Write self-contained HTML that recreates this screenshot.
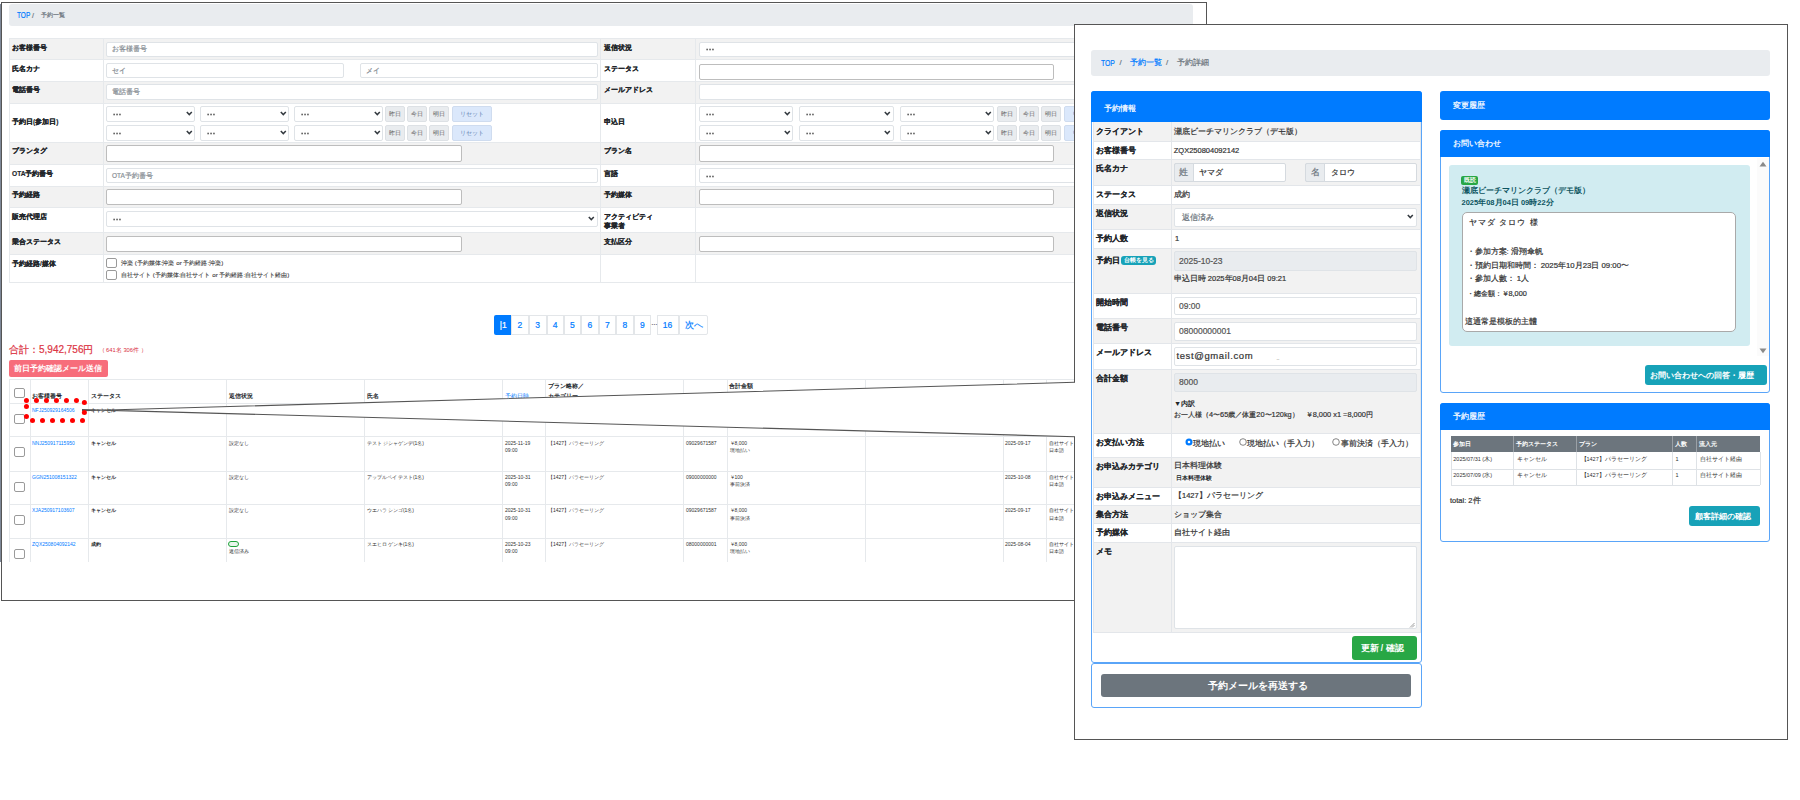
<!DOCTYPE html>
<html><head><meta charset="utf-8"><style>
html,body{margin:0;padding:0;background:#fff;width:1800px;height:800px;overflow:hidden;position:relative}
body{font-family:"Liberation Sans",sans-serif}
div{position:absolute}
.t{white-space:nowrap}
.s{-webkit-text-stroke:0.2px currentColor}
</style></head><body>
<div style="left:1px;top:2px;width:1206px;height:599px;border:1px solid #555;background:#fff;box-sizing:border-box"></div>
<div style="left:0px;top:4px;width:1px;height:558px;background:#7d8797"></div>
<div style="left:9px;top:4px;width:1184px;height:22px;background:#e9ecef;border-radius:3px"></div>
<div class="t s" style="left:16.5px;top:10.88px;font-size:9px;line-height:9px;color:#007bff;transform:scaleX(0.72);transform-origin:0 0">TOP</div>
<div class="t s" style="left:32px;top:11.84px;font-size:7px;line-height:7px;color:#6c757d;">/</div>
<div class="t s" style="left:41px;top:12.13px;font-size:6.4px;line-height:6.4px;color:#6c757d;">予約一覧</div>
<div style="left:9px;top:38.5px;width:1184px;height:21.0px;background:#f2f2f2"></div>
<div style="left:9px;top:81px;width:1184px;height:22px;background:#f2f2f2"></div>
<div style="left:9px;top:142px;width:1184px;height:22.5px;background:#f2f2f2"></div>
<div style="left:9px;top:186px;width:1184px;height:21.5px;background:#f2f2f2"></div>
<div style="left:9px;top:232.5px;width:1184px;height:22.0px;background:#f2f2f2"></div>
<div style="left:9px;top:38.0px;width:1184px;height:1.0px;background:#e6e9ec"></div>
<div style="left:9px;top:59.0px;width:1184px;height:1.0px;background:#e6e9ec"></div>
<div style="left:9px;top:80.5px;width:1184px;height:1.0px;background:#e6e9ec"></div>
<div style="left:9px;top:102.5px;width:1184px;height:1.0px;background:#e6e9ec"></div>
<div style="left:9px;top:141.5px;width:1184px;height:1.0px;background:#e6e9ec"></div>
<div style="left:9px;top:164.0px;width:1184px;height:1.0px;background:#e6e9ec"></div>
<div style="left:9px;top:185.5px;width:1184px;height:1.0px;background:#e6e9ec"></div>
<div style="left:9px;top:207.0px;width:1184px;height:1.0px;background:#e6e9ec"></div>
<div style="left:9px;top:232.0px;width:1184px;height:1.0px;background:#e6e9ec"></div>
<div style="left:9px;top:254.0px;width:1184px;height:1.0px;background:#e6e9ec"></div>
<div style="left:9px;top:282.0px;width:1184px;height:1.0px;background:#e6e9ec"></div>
<div style="left:9px;top:38.5px;width:1px;height:244.0px;background:#e6e9ec"></div>
<div style="left:103px;top:38.5px;width:1px;height:244.0px;background:#e6e9ec"></div>
<div style="left:600px;top:38.5px;width:1px;height:244.0px;background:#e6e9ec"></div>
<div style="left:695px;top:38.5px;width:1px;height:244.0px;background:#e6e9ec"></div>
<div style="left:1192px;top:38.5px;width:1px;height:244.0px;background:#e6e9ec"></div>
<div class="t" style="left:12px;top:44.63px;font-size:6.6px;line-height:6.6px;color:#212529;font-weight:bold;-webkit-text-stroke:0.15px #212529">お客様番号</div>
<div class="t" style="left:603.5px;top:44.63px;font-size:6.6px;line-height:6.6px;color:#212529;font-weight:bold;-webkit-text-stroke:0.15px #212529">返信状況</div>
<div class="t" style="left:12px;top:65.63px;font-size:6.6px;line-height:6.6px;color:#212529;font-weight:bold;-webkit-text-stroke:0.15px #212529">氏名カナ</div>
<div class="t" style="left:603.5px;top:65.63px;font-size:6.6px;line-height:6.6px;color:#212529;font-weight:bold;-webkit-text-stroke:0.15px #212529">ステータス</div>
<div class="t" style="left:12px;top:87.13px;font-size:6.6px;line-height:6.6px;color:#212529;font-weight:bold;-webkit-text-stroke:0.15px #212529">電話番号</div>
<div class="t" style="left:603.5px;top:87.13px;font-size:6.6px;line-height:6.6px;color:#212529;font-weight:bold;-webkit-text-stroke:0.15px #212529">メールアドレス</div>
<div class="t" style="left:12px;top:119.33px;font-size:6.6px;line-height:6.6px;color:#212529;font-weight:bold;-webkit-text-stroke:0.15px #212529">予約日(参加日)</div>
<div class="t" style="left:603.5px;top:119.33px;font-size:6.6px;line-height:6.6px;color:#212529;font-weight:bold;-webkit-text-stroke:0.15px #212529">申込日</div>
<div class="t" style="left:12px;top:148.13px;font-size:6.6px;line-height:6.6px;color:#212529;font-weight:bold;-webkit-text-stroke:0.15px #212529">プランタグ</div>
<div class="t" style="left:603.5px;top:148.13px;font-size:6.6px;line-height:6.6px;color:#212529;font-weight:bold;-webkit-text-stroke:0.15px #212529">プラン名</div>
<div class="t" style="left:12px;top:170.63px;font-size:6.6px;line-height:6.6px;color:#212529;font-weight:bold;-webkit-text-stroke:0.15px #212529">OTA予約番号</div>
<div class="t" style="left:603.5px;top:170.63px;font-size:6.6px;line-height:6.6px;color:#212529;font-weight:bold;-webkit-text-stroke:0.15px #212529">言語</div>
<div class="t" style="left:12px;top:192.13px;font-size:6.6px;line-height:6.6px;color:#212529;font-weight:bold;-webkit-text-stroke:0.15px #212529">予約経路</div>
<div class="t" style="left:603.5px;top:192.13px;font-size:6.6px;line-height:6.6px;color:#212529;font-weight:bold;-webkit-text-stroke:0.15px #212529">予約媒体</div>
<div class="t" style="left:12px;top:213.63px;font-size:6.6px;line-height:6.6px;color:#212529;font-weight:bold;-webkit-text-stroke:0.15px #212529">販売代理店</div>
<div class="t" style="left:603.5px;top:211.7px;font-size:6.6px;line-height:9.6px;color:#212529;font-weight:bold;-webkit-text-stroke:0.15px #212529">アクティビティ<br>事業者</div>
<div class="t" style="left:12px;top:238.63px;font-size:6.6px;line-height:6.6px;color:#212529;font-weight:bold;-webkit-text-stroke:0.15px #212529">乗合ステータス</div>
<div class="t" style="left:603.5px;top:238.63px;font-size:6.6px;line-height:6.6px;color:#212529;font-weight:bold;-webkit-text-stroke:0.15px #212529">支払区分</div>
<div class="t" style="left:12px;top:260.63px;font-size:6.6px;line-height:6.6px;color:#212529;font-weight:bold;-webkit-text-stroke:0.15px #212529">予約経路/媒体</div>
<div style="left:106px;top:41.5px;width:491.5px;height:15.0px;background:#fff;border:1px solid #dfe3e7;border-radius:2px;box-sizing:border-box"></div>
<div class="t s" style="left:112px;top:46.38px;font-size:6.5px;line-height:6.5px;color:#8a9197;">お客様番号</div>
<div style="left:106px;top:62.5px;width:238px;height:15.5px;background:#fff;border:1px solid #dfe3e7;border-radius:2px;box-sizing:border-box"></div>
<div class="t s" style="left:112px;top:67.63px;font-size:6.5px;line-height:6.5px;color:#8a9197;">セイ</div>
<div style="left:360px;top:62.5px;width:237.5px;height:15.5px;background:#fff;border:1px solid #dfe3e7;border-radius:2px;box-sizing:border-box"></div>
<div class="t s" style="left:366px;top:67.63px;font-size:6.5px;line-height:6.5px;color:#8a9197;">メイ</div>
<div style="left:106px;top:84px;width:491.5px;height:15.5px;background:#fff;border:1px solid #dfe3e7;border-radius:2px;box-sizing:border-box"></div>
<div class="t s" style="left:112px;top:89.13px;font-size:6.5px;line-height:6.5px;color:#8a9197;">電話番号</div>
<div style="left:106.3px;top:106px;width:88.7px;height:16px;background:#fff;border:1px solid #dfe3e7;border-radius:2px;box-sizing:border-box"></div>
<svg style="position:absolute;left:113.3px;top:113.3px" width="10" height="3"><rect x="0.3" y="0.7" width="1.7" height="1.6" fill="#666"/><rect x="3.1999999999999997" y="0.7" width="1.7" height="1.6" fill="#666"/><rect x="6.1" y="0.7" width="1.7" height="1.6" fill="#666"/></svg>
<svg style="position:absolute;left:185.8px;top:111.19px;overflow:visible" width="6.6" height="5.63"><path d="M0.8 1 L3.3 3.63 L5.8 1" fill="none" stroke="#343a40" stroke-width="1.5"/></svg>
<div style="left:200.3px;top:106px;width:88.7px;height:16px;background:#fff;border:1px solid #dfe3e7;border-radius:2px;box-sizing:border-box"></div>
<svg style="position:absolute;left:207.3px;top:113.3px" width="10" height="3"><rect x="0.3" y="0.7" width="1.7" height="1.6" fill="#666"/><rect x="3.1999999999999997" y="0.7" width="1.7" height="1.6" fill="#666"/><rect x="6.1" y="0.7" width="1.7" height="1.6" fill="#666"/></svg>
<svg style="position:absolute;left:279.8px;top:111.19px;overflow:visible" width="6.6" height="5.63"><path d="M0.8 1 L3.3 3.63 L5.8 1" fill="none" stroke="#343a40" stroke-width="1.5"/></svg>
<div style="left:294.3px;top:106px;width:88.7px;height:16px;background:#fff;border:1px solid #dfe3e7;border-radius:2px;box-sizing:border-box"></div>
<svg style="position:absolute;left:301.3px;top:113.3px" width="10" height="3"><rect x="0.3" y="0.7" width="1.7" height="1.6" fill="#666"/><rect x="3.1999999999999997" y="0.7" width="1.7" height="1.6" fill="#666"/><rect x="6.1" y="0.7" width="1.7" height="1.6" fill="#666"/></svg>
<svg style="position:absolute;left:373.8px;top:111.19px;overflow:visible" width="6.6" height="5.63"><path d="M0.8 1 L3.3 3.63 L5.8 1" fill="none" stroke="#343a40" stroke-width="1.5"/></svg>
<div style="left:385.0px;top:106px;width:19.5px;height:16px;background:#e9ecef;border:1px solid #dde1e5;border-radius:2px;box-sizing:border-box"></div>
<div class="t" style="left:388.5px;top:111.42px;font-size:6px;line-height:6px;color:#555;">昨日</div>
<div style="left:407.2px;top:106px;width:19.5px;height:16px;background:#e9ecef;border:1px solid #dde1e5;border-radius:2px;box-sizing:border-box"></div>
<div class="t" style="left:410.7px;top:111.42px;font-size:6px;line-height:6px;color:#555;">今日</div>
<div style="left:429.4px;top:106px;width:19.5px;height:16px;background:#e9ecef;border:1px solid #dde1e5;border-radius:2px;box-sizing:border-box"></div>
<div class="t" style="left:432.9px;top:111.42px;font-size:6px;line-height:6px;color:#555;">明日</div>
<div style="left:451.8px;top:106px;width:40.0px;height:16px;background:#dbe8fb;border:1px solid #cfdcef;border-radius:2px;box-sizing:border-box"></div>
<div class="t" style="left:459.8px;top:111.42px;font-size:6px;line-height:6px;color:#5a7eb0;">リセット</div>
<div style="left:106.3px;top:124.5px;width:88.7px;height:16.0px;background:#fff;border:1px solid #dfe3e7;border-radius:2px;box-sizing:border-box"></div>
<svg style="position:absolute;left:113.3px;top:131.8px" width="10" height="3"><rect x="0.3" y="0.7" width="1.7" height="1.6" fill="#666"/><rect x="3.1999999999999997" y="0.7" width="1.7" height="1.6" fill="#666"/><rect x="6.1" y="0.7" width="1.7" height="1.6" fill="#666"/></svg>
<svg style="position:absolute;left:185.8px;top:129.69px;overflow:visible" width="6.6" height="5.63"><path d="M0.8 1 L3.3 3.63 L5.8 1" fill="none" stroke="#343a40" stroke-width="1.5"/></svg>
<div style="left:200.3px;top:124.5px;width:88.7px;height:16.0px;background:#fff;border:1px solid #dfe3e7;border-radius:2px;box-sizing:border-box"></div>
<svg style="position:absolute;left:207.3px;top:131.8px" width="10" height="3"><rect x="0.3" y="0.7" width="1.7" height="1.6" fill="#666"/><rect x="3.1999999999999997" y="0.7" width="1.7" height="1.6" fill="#666"/><rect x="6.1" y="0.7" width="1.7" height="1.6" fill="#666"/></svg>
<svg style="position:absolute;left:279.8px;top:129.69px;overflow:visible" width="6.6" height="5.63"><path d="M0.8 1 L3.3 3.63 L5.8 1" fill="none" stroke="#343a40" stroke-width="1.5"/></svg>
<div style="left:294.3px;top:124.5px;width:88.7px;height:16.0px;background:#fff;border:1px solid #dfe3e7;border-radius:2px;box-sizing:border-box"></div>
<svg style="position:absolute;left:301.3px;top:131.8px" width="10" height="3"><rect x="0.3" y="0.7" width="1.7" height="1.6" fill="#666"/><rect x="3.1999999999999997" y="0.7" width="1.7" height="1.6" fill="#666"/><rect x="6.1" y="0.7" width="1.7" height="1.6" fill="#666"/></svg>
<svg style="position:absolute;left:373.8px;top:129.69px;overflow:visible" width="6.6" height="5.63"><path d="M0.8 1 L3.3 3.63 L5.8 1" fill="none" stroke="#343a40" stroke-width="1.5"/></svg>
<div style="left:385.0px;top:124.5px;width:19.5px;height:16.0px;background:#e9ecef;border:1px solid #dde1e5;border-radius:2px;box-sizing:border-box"></div>
<div class="t" style="left:388.5px;top:129.92px;font-size:6px;line-height:6px;color:#555;">昨日</div>
<div style="left:407.2px;top:124.5px;width:19.5px;height:16.0px;background:#e9ecef;border:1px solid #dde1e5;border-radius:2px;box-sizing:border-box"></div>
<div class="t" style="left:410.7px;top:129.92px;font-size:6px;line-height:6px;color:#555;">今日</div>
<div style="left:429.4px;top:124.5px;width:19.5px;height:16.0px;background:#e9ecef;border:1px solid #dde1e5;border-radius:2px;box-sizing:border-box"></div>
<div class="t" style="left:432.9px;top:129.92px;font-size:6px;line-height:6px;color:#555;">明日</div>
<div style="left:451.8px;top:124.5px;width:40.0px;height:16.0px;background:#dbe8fb;border:1px solid #cfdcef;border-radius:2px;box-sizing:border-box"></div>
<div class="t" style="left:459.8px;top:129.92px;font-size:6px;line-height:6px;color:#5a7eb0;">リセット</div>
<div style="left:106px;top:145.3px;width:356px;height:16.9px;background:#fff;border:1px solid #bdbdbd;border-radius:2px;box-sizing:border-box"></div>
<div style="left:106px;top:167.5px;width:491.5px;height:15.5px;background:#fff;border:1px solid #dfe3e7;border-radius:2px;box-sizing:border-box"></div>
<div class="t s" style="left:112px;top:172.63px;font-size:6.5px;line-height:6.5px;color:#8a9197;">OTA予約番号</div>
<div style="left:106px;top:188.5px;width:356px;height:16.5px;background:#fff;border:1px solid #bdbdbd;border-radius:2px;box-sizing:border-box"></div>
<div style="left:106px;top:210.5px;width:491.5px;height:16.0px;background:#fff;border:1px solid #dfe3e7;border-radius:2px;box-sizing:border-box"></div>
<svg style="position:absolute;left:113px;top:217.8px" width="10" height="3"><rect x="0.3" y="0.7" width="1.7" height="1.6" fill="#666"/><rect x="3.1999999999999997" y="0.7" width="1.7" height="1.6" fill="#666"/><rect x="6.1" y="0.7" width="1.7" height="1.6" fill="#666"/></svg>
<svg style="position:absolute;left:588.3px;top:215.69px;overflow:visible" width="6.6" height="5.63"><path d="M0.8 1 L3.3 3.63 L5.8 1" fill="none" stroke="#343a40" stroke-width="1.5"/></svg>
<div style="left:106px;top:235.5px;width:356px;height:16.5px;background:#fff;border:1px solid #bdbdbd;border-radius:2px;box-sizing:border-box"></div>
<div style="left:106px;top:257.6px;width:10.5px;height:10.0px;background:#fff;border:1px solid #9a9a9a;border-radius:2px;box-sizing:border-box"></div>
<div class="t" style="left:121px;top:259.82px;font-size:6.2px;line-height:6.2px;color:#444;-webkit-text-stroke:0.12px #444">沖楽 (予約媒体:沖楽 or 予約経路:沖楽)</div>
<div style="left:106px;top:270.2px;width:10.5px;height:10.0px;background:#fff;border:1px solid #9a9a9a;border-radius:2px;box-sizing:border-box"></div>
<div class="t" style="left:121px;top:272.42px;font-size:6.2px;line-height:6.2px;color:#444;-webkit-text-stroke:0.12px #444">自社サイト (予約媒体:自社サイト or 予約経路:自社サイト経由)</div>
<div style="left:698.5px;top:41.5px;width:491.5px;height:15.0px;background:#fff;border:1px solid #dfe3e7;border-radius:2px;box-sizing:border-box"></div>
<svg style="position:absolute;left:705.5px;top:48.3px" width="10" height="3"><rect x="0.3" y="0.7" width="1.7" height="1.6" fill="#666"/><rect x="3.1999999999999997" y="0.7" width="1.7" height="1.6" fill="#666"/><rect x="6.1" y="0.7" width="1.7" height="1.6" fill="#666"/></svg>
<svg style="position:absolute;left:1180.8px;top:46.19px;overflow:visible" width="6.6" height="5.63"><path d="M0.8 1 L3.3 3.63 L5.8 1" fill="none" stroke="#343a40" stroke-width="1.5"/></svg>
<div style="left:698.5px;top:63.5px;width:355.5px;height:16.0px;background:#fff;border:1px solid #bdbdbd;border-radius:2px;box-sizing:border-box"></div>
<div style="left:698.5px;top:84px;width:491.5px;height:15.5px;background:#fff;border:1px solid #dfe3e7;border-radius:2px;box-sizing:border-box"></div>
<div style="left:698.5px;top:106px;width:94.5px;height:16px;background:#fff;border:1px solid #dfe3e7;border-radius:2px;box-sizing:border-box"></div>
<svg style="position:absolute;left:705.5px;top:113.3px" width="10" height="3"><rect x="0.3" y="0.7" width="1.7" height="1.6" fill="#666"/><rect x="3.1999999999999997" y="0.7" width="1.7" height="1.6" fill="#666"/><rect x="6.1" y="0.7" width="1.7" height="1.6" fill="#666"/></svg>
<svg style="position:absolute;left:783.8px;top:111.19px;overflow:visible" width="6.6" height="5.63"><path d="M0.8 1 L3.3 3.63 L5.8 1" fill="none" stroke="#343a40" stroke-width="1.5"/></svg>
<div style="left:799.0px;top:106px;width:94.5px;height:16px;background:#fff;border:1px solid #dfe3e7;border-radius:2px;box-sizing:border-box"></div>
<svg style="position:absolute;left:806.0px;top:113.3px" width="10" height="3"><rect x="0.3" y="0.7" width="1.7" height="1.6" fill="#666"/><rect x="3.1999999999999997" y="0.7" width="1.7" height="1.6" fill="#666"/><rect x="6.1" y="0.7" width="1.7" height="1.6" fill="#666"/></svg>
<svg style="position:absolute;left:884.3px;top:111.19px;overflow:visible" width="6.6" height="5.63"><path d="M0.8 1 L3.3 3.63 L5.8 1" fill="none" stroke="#343a40" stroke-width="1.5"/></svg>
<div style="left:899.5px;top:106px;width:94.5px;height:16px;background:#fff;border:1px solid #dfe3e7;border-radius:2px;box-sizing:border-box"></div>
<svg style="position:absolute;left:906.5px;top:113.3px" width="10" height="3"><rect x="0.3" y="0.7" width="1.7" height="1.6" fill="#666"/><rect x="3.1999999999999997" y="0.7" width="1.7" height="1.6" fill="#666"/><rect x="6.1" y="0.7" width="1.7" height="1.6" fill="#666"/></svg>
<svg style="position:absolute;left:984.8px;top:111.19px;overflow:visible" width="6.6" height="5.63"><path d="M0.8 1 L3.3 3.63 L5.8 1" fill="none" stroke="#343a40" stroke-width="1.5"/></svg>
<div style="left:997.0px;top:106px;width:19.5px;height:16px;background:#e9ecef;border:1px solid #dde1e5;border-radius:2px;box-sizing:border-box"></div>
<div class="t" style="left:1000.5px;top:111.42px;font-size:6px;line-height:6px;color:#555;">昨日</div>
<div style="left:1019.2px;top:106px;width:19.5px;height:16px;background:#e9ecef;border:1px solid #dde1e5;border-radius:2px;box-sizing:border-box"></div>
<div class="t" style="left:1022.7px;top:111.42px;font-size:6px;line-height:6px;color:#555;">今日</div>
<div style="left:1041.4px;top:106px;width:19.5px;height:16px;background:#e9ecef;border:1px solid #dde1e5;border-radius:2px;box-sizing:border-box"></div>
<div class="t" style="left:1044.9px;top:111.42px;font-size:6px;line-height:6px;color:#555;">明日</div>
<div style="left:1063.8px;top:106px;width:40.0px;height:16px;background:#dbe8fb;border:1px solid #cfdcef;border-radius:2px;box-sizing:border-box"></div>
<div class="t" style="left:1071.8px;top:111.42px;font-size:6px;line-height:6px;color:#5a7eb0;">リセット</div>
<div style="left:698.5px;top:124.5px;width:94.5px;height:16.0px;background:#fff;border:1px solid #dfe3e7;border-radius:2px;box-sizing:border-box"></div>
<svg style="position:absolute;left:705.5px;top:131.8px" width="10" height="3"><rect x="0.3" y="0.7" width="1.7" height="1.6" fill="#666"/><rect x="3.1999999999999997" y="0.7" width="1.7" height="1.6" fill="#666"/><rect x="6.1" y="0.7" width="1.7" height="1.6" fill="#666"/></svg>
<svg style="position:absolute;left:783.8px;top:129.69px;overflow:visible" width="6.6" height="5.63"><path d="M0.8 1 L3.3 3.63 L5.8 1" fill="none" stroke="#343a40" stroke-width="1.5"/></svg>
<div style="left:799.0px;top:124.5px;width:94.5px;height:16.0px;background:#fff;border:1px solid #dfe3e7;border-radius:2px;box-sizing:border-box"></div>
<svg style="position:absolute;left:806.0px;top:131.8px" width="10" height="3"><rect x="0.3" y="0.7" width="1.7" height="1.6" fill="#666"/><rect x="3.1999999999999997" y="0.7" width="1.7" height="1.6" fill="#666"/><rect x="6.1" y="0.7" width="1.7" height="1.6" fill="#666"/></svg>
<svg style="position:absolute;left:884.3px;top:129.69px;overflow:visible" width="6.6" height="5.63"><path d="M0.8 1 L3.3 3.63 L5.8 1" fill="none" stroke="#343a40" stroke-width="1.5"/></svg>
<div style="left:899.5px;top:124.5px;width:94.5px;height:16.0px;background:#fff;border:1px solid #dfe3e7;border-radius:2px;box-sizing:border-box"></div>
<svg style="position:absolute;left:906.5px;top:131.8px" width="10" height="3"><rect x="0.3" y="0.7" width="1.7" height="1.6" fill="#666"/><rect x="3.1999999999999997" y="0.7" width="1.7" height="1.6" fill="#666"/><rect x="6.1" y="0.7" width="1.7" height="1.6" fill="#666"/></svg>
<svg style="position:absolute;left:984.8px;top:129.69px;overflow:visible" width="6.6" height="5.63"><path d="M0.8 1 L3.3 3.63 L5.8 1" fill="none" stroke="#343a40" stroke-width="1.5"/></svg>
<div style="left:997.0px;top:124.5px;width:19.5px;height:16.0px;background:#e9ecef;border:1px solid #dde1e5;border-radius:2px;box-sizing:border-box"></div>
<div class="t" style="left:1000.5px;top:129.92px;font-size:6px;line-height:6px;color:#555;">昨日</div>
<div style="left:1019.2px;top:124.5px;width:19.5px;height:16.0px;background:#e9ecef;border:1px solid #dde1e5;border-radius:2px;box-sizing:border-box"></div>
<div class="t" style="left:1022.7px;top:129.92px;font-size:6px;line-height:6px;color:#555;">今日</div>
<div style="left:1041.4px;top:124.5px;width:19.5px;height:16.0px;background:#e9ecef;border:1px solid #dde1e5;border-radius:2px;box-sizing:border-box"></div>
<div class="t" style="left:1044.9px;top:129.92px;font-size:6px;line-height:6px;color:#555;">明日</div>
<div style="left:1063.8px;top:124.5px;width:40.0px;height:16.0px;background:#dbe8fb;border:1px solid #cfdcef;border-radius:2px;box-sizing:border-box"></div>
<div class="t" style="left:1071.8px;top:129.92px;font-size:6px;line-height:6px;color:#5a7eb0;">リセット</div>
<div style="left:698.5px;top:145.3px;width:355.5px;height:16.9px;background:#fff;border:1px solid #bdbdbd;border-radius:2px;box-sizing:border-box"></div>
<div style="left:698.5px;top:167.5px;width:491.5px;height:15.5px;background:#fff;border:1px solid #dfe3e7;border-radius:2px;box-sizing:border-box"></div>
<svg style="position:absolute;left:705.5px;top:174.55px" width="10" height="3"><rect x="0.3" y="0.7" width="1.7" height="1.6" fill="#666"/><rect x="3.1999999999999997" y="0.7" width="1.7" height="1.6" fill="#666"/><rect x="6.1" y="0.7" width="1.7" height="1.6" fill="#666"/></svg>
<svg style="position:absolute;left:1180.8px;top:172.44px;overflow:visible" width="6.6" height="5.63"><path d="M0.8 1 L3.3 3.63 L5.8 1" fill="none" stroke="#343a40" stroke-width="1.5"/></svg>
<div style="left:698.5px;top:188.5px;width:355.5px;height:16.5px;background:#fff;border:1px solid #bdbdbd;border-radius:2px;box-sizing:border-box"></div>
<div style="left:698.5px;top:235.5px;width:355.5px;height:16.5px;background:#fff;border:1px solid #bdbdbd;border-radius:2px;box-sizing:border-box"></div>
<div style="left:493.75px;top:315px;width:17.25px;height:19.5px;background:#007bff;border-radius:2px 0 0 2px"></div>
<div class="t s" style="left:499.75px;top:321.42px;font-size:8.5px;line-height:8.5px;color:#fff;">|1</div>
<div style="left:511px;top:315px;width:17.5px;height:19.5px;background:#fff;border:1px solid #e3e6e9;box-sizing:border-box"></div>
<div class="t s" style="left:517.4px;top:321.42px;font-size:8.5px;line-height:8.5px;color:#007bff;">2</div>
<div style="left:528.5px;top:315px;width:18.0px;height:19.5px;background:#fff;border:1px solid #e3e6e9;box-sizing:border-box"></div>
<div class="t s" style="left:535.15px;top:321.42px;font-size:8.5px;line-height:8.5px;color:#007bff;">3</div>
<div style="left:546.5px;top:315px;width:17.25px;height:19.5px;background:#fff;border:1px solid #e3e6e9;box-sizing:border-box"></div>
<div class="t s" style="left:552.77px;top:321.42px;font-size:8.5px;line-height:8.5px;color:#007bff;">4</div>
<div style="left:563.75px;top:315px;width:17.25px;height:19.5px;background:#fff;border:1px solid #e3e6e9;box-sizing:border-box"></div>
<div class="t s" style="left:570.02px;top:321.42px;font-size:8.5px;line-height:8.5px;color:#007bff;">5</div>
<div style="left:581px;top:315px;width:17.5px;height:19.5px;background:#fff;border:1px solid #e3e6e9;box-sizing:border-box"></div>
<div class="t s" style="left:587.4px;top:321.42px;font-size:8.5px;line-height:8.5px;color:#007bff;">6</div>
<div style="left:598.5px;top:315px;width:17.5px;height:19.5px;background:#fff;border:1px solid #e3e6e9;box-sizing:border-box"></div>
<div class="t s" style="left:604.9px;top:321.42px;font-size:8.5px;line-height:8.5px;color:#007bff;">7</div>
<div style="left:616px;top:315px;width:17.5px;height:19.5px;background:#fff;border:1px solid #e3e6e9;box-sizing:border-box"></div>
<div class="t s" style="left:622.4px;top:321.42px;font-size:8.5px;line-height:8.5px;color:#007bff;">8</div>
<div style="left:633.5px;top:315px;width:17.5px;height:19.5px;background:#fff;border:1px solid #e3e6e9;box-sizing:border-box"></div>
<div class="t s" style="left:639.9px;top:321.42px;font-size:8.5px;line-height:8.5px;color:#007bff;">9</div>
<div style="left:656.5px;top:315px;width:22.0px;height:19.5px;background:#fff;border:1px solid #e3e6e9;box-sizing:border-box"></div>
<div class="t s" style="left:662.8px;top:321.42px;font-size:8.5px;line-height:8.5px;color:#007bff;">16</div>
<div style="left:678.5px;top:315px;width:29.0px;height:19.5px;background:#fff;border:1px solid #e3e6e9;box-sizing:border-box;border-radius:0 2px 2px 0"></div>
<div class="t s" style="left:684.5px;top:321.42px;font-size:8.5px;line-height:8.5px;color:#007bff;">次へ</div>
<div class="t" style="left:651.5px;top:321.42px;font-size:6px;line-height:6px;color:#444;font-weight:bold;">···</div>
<div class="t s" style="left:9px;top:345.2px;font-size:10px;line-height:10px;color:#dc3545;">合計：5,942,756円</div>
<div class="t" style="left:98.5px;top:347.72px;font-size:5.8px;line-height:5.8px;color:#d9303f;">（ 641名 306件 ）</div>
<div style="left:9px;top:360.3px;width:99px;height:17.2px;background:#f76d7b;border-radius:2px"></div>
<div class="t" style="left:13.5px;top:365.36px;font-size:8px;line-height:8px;color:#fff;font-weight:bold;">前日予約確認メール送信</div>
<div style="left:9px;top:378.5px;width:1184px;height:1.0px;background:#e6e9ec"></div>
<div style="left:9px;top:403.3px;width:1184px;height:1.0px;background:#e6e9ec"></div>
<div style="left:9px;top:436.25px;width:1184px;height:1.0px;background:#e6e9ec"></div>
<div style="left:9px;top:470.5px;width:1184px;height:1.0px;background:#e6e9ec"></div>
<div style="left:9px;top:503.75px;width:1184px;height:1.0px;background:#e6e9ec"></div>
<div style="left:9px;top:537.5px;width:1184px;height:1.0px;background:#e6e9ec"></div>
<div style="left:9px;top:378.5px;width:1px;height:183.5px;background:#e6e9ec"></div>
<div style="left:29.5px;top:378.5px;width:1.0px;height:183.5px;background:#e6e9ec"></div>
<div style="left:87.5px;top:378.5px;width:1.0px;height:183.5px;background:#e6e9ec"></div>
<div style="left:225.5px;top:378.5px;width:1.0px;height:183.5px;background:#e6e9ec"></div>
<div style="left:363.5px;top:378.5px;width:1.0px;height:183.5px;background:#e6e9ec"></div>
<div style="left:502px;top:378.5px;width:1px;height:183.5px;background:#e6e9ec"></div>
<div style="left:544.5px;top:378.5px;width:1.0px;height:183.5px;background:#e6e9ec"></div>
<div style="left:683px;top:378.5px;width:1px;height:183.5px;background:#e6e9ec"></div>
<div style="left:726.5px;top:378.5px;width:1.0px;height:183.5px;background:#e6e9ec"></div>
<div style="left:864.5px;top:378.5px;width:1.0px;height:183.5px;background:#e6e9ec"></div>
<div style="left:1002.5px;top:378.5px;width:1.0px;height:183.5px;background:#e6e9ec"></div>
<div style="left:1045.5px;top:378.5px;width:1.0px;height:183.5px;background:#e6e9ec"></div>
<div style="left:1193px;top:378.5px;width:1px;height:183.5px;background:#e6e9ec"></div>
<div class="t" style="left:32px;top:393.12px;font-size:6px;line-height:6px;color:#212529;font-weight:bold;">お客様番号</div>
<div class="t" style="left:91px;top:393.12px;font-size:6px;line-height:6px;color:#212529;font-weight:bold;">ステータス</div>
<div class="t" style="left:228.5px;top:393.12px;font-size:6px;line-height:6px;color:#212529;font-weight:bold;">返信状況</div>
<div class="t" style="left:366.5px;top:393.12px;font-size:6px;line-height:6px;color:#212529;font-weight:bold;">氏名</div>
<div class="t" style="left:505px;top:393.12px;font-size:6px;line-height:6px;color:#007bff;text-decoration:underline">予約日時</div>
<div class="t" style="left:548px;top:383.12px;font-size:6px;line-height:6px;color:#212529;font-weight:bold;">プラン略称／</div>
<div class="t" style="left:548px;top:393.12px;font-size:6px;line-height:6px;color:#212529;font-weight:bold;">カテゴリー</div>
<div class="t" style="left:729px;top:383.12px;font-size:6px;line-height:6px;color:#212529;font-weight:bold;">合計金額</div>
<div style="left:14px;top:388px;width:10.5px;height:10px;background:#fff;border:1px solid #9a9a9a;border-radius:2px;box-sizing:border-box"></div>
<div style="left:14px;top:413.8px;width:10.5px;height:10.0px;background:#fff;border:1px solid #9a9a9a;border-radius:2px;box-sizing:border-box"></div>
<div class="t" style="left:32px;top:407.7px;font-size:5px;line-height:5px;color:#007bff;">NFJ250929164506</div>
<div class="t" style="left:90.5px;top:407.7px;font-size:5px;line-height:5px;color:#212529;font-weight:bold;">キャンセル</div>
<div class="t" style="left:228.5px;top:407.7px;font-size:5px;line-height:5px;color:#333;">設定なし</div>
<div class="t" style="left:366.5px;top:407.7px;font-size:5px;line-height:5px;color:#333;">テスト ジシャゲンデ(1名)</div>
<div class="t" style="left:505px;top:407.7px;font-size:5px;line-height:5px;color:#333;">2025-11-19</div>
<div class="t" style="left:505px;top:415.2px;font-size:5px;line-height:5px;color:#333;">09:00</div>
<div class="t" style="left:548px;top:407.7px;font-size:5px;line-height:5px;color:#333;">【1427】パラセーリング</div>
<div class="t" style="left:686px;top:407.7px;font-size:5px;line-height:5px;color:#333;">09029671587</div>
<div class="t" style="left:729.5px;top:407.7px;font-size:5px;line-height:5px;color:#333;">￥8,000</div>
<div class="t" style="left:729.5px;top:415.2px;font-size:5px;line-height:5px;color:#333;">現地払い</div>
<div class="t" style="left:1005px;top:407.7px;font-size:5px;line-height:5px;color:#333;">2025-09-17</div>
<div class="t" style="left:1049px;top:407.7px;font-size:5px;line-height:5px;color:#333;">自社サイト</div>
<div class="t" style="left:1049px;top:415.2px;font-size:5px;line-height:5px;color:#333;">日本語</div>
<div style="left:14px;top:447.25px;width:10.5px;height:10.0px;background:#fff;border:1px solid #9a9a9a;border-radius:2px;box-sizing:border-box"></div>
<div class="t" style="left:32px;top:440.65px;font-size:5px;line-height:5px;color:#007bff;">NNJ250917115950</div>
<div class="t" style="left:90.5px;top:440.65px;font-size:5px;line-height:5px;color:#212529;font-weight:bold;">キャンセル</div>
<div class="t" style="left:228.5px;top:440.65px;font-size:5px;line-height:5px;color:#333;">設定なし</div>
<div class="t" style="left:366.5px;top:440.65px;font-size:5px;line-height:5px;color:#333;">テスト ジシャゲンデ(1名)</div>
<div class="t" style="left:505px;top:440.65px;font-size:5px;line-height:5px;color:#333;">2025-11-19</div>
<div class="t" style="left:505px;top:448.15px;font-size:5px;line-height:5px;color:#333;">09:00</div>
<div class="t" style="left:548px;top:440.65px;font-size:5px;line-height:5px;color:#333;">【1427】パラセーリング</div>
<div class="t" style="left:686px;top:440.65px;font-size:5px;line-height:5px;color:#333;">09029671587</div>
<div class="t" style="left:729.5px;top:440.65px;font-size:5px;line-height:5px;color:#333;">￥8,000</div>
<div class="t" style="left:729.5px;top:448.15px;font-size:5px;line-height:5px;color:#333;">現地払い</div>
<div class="t" style="left:1005px;top:440.65px;font-size:5px;line-height:5px;color:#333;">2025-09-17</div>
<div class="t" style="left:1049px;top:440.65px;font-size:5px;line-height:5px;color:#333;">自社サイト</div>
<div class="t" style="left:1049px;top:448.15px;font-size:5px;line-height:5px;color:#333;">日本語</div>
<div style="left:14px;top:481.5px;width:10.5px;height:10.0px;background:#fff;border:1px solid #9a9a9a;border-radius:2px;box-sizing:border-box"></div>
<div class="t" style="left:32px;top:474.9px;font-size:5px;line-height:5px;color:#007bff;">GGN251008151322</div>
<div class="t" style="left:90.5px;top:474.9px;font-size:5px;line-height:5px;color:#212529;font-weight:bold;">キャンセル</div>
<div class="t" style="left:228.5px;top:474.9px;font-size:5px;line-height:5px;color:#333;">設定なし</div>
<div class="t" style="left:366.5px;top:474.9px;font-size:5px;line-height:5px;color:#333;">アップルペイ テスト(1名)</div>
<div class="t" style="left:505px;top:474.9px;font-size:5px;line-height:5px;color:#333;">2025-10-31</div>
<div class="t" style="left:505px;top:482.4px;font-size:5px;line-height:5px;color:#333;">09:00</div>
<div class="t" style="left:548px;top:474.9px;font-size:5px;line-height:5px;color:#333;">【1427】パラセーリング</div>
<div class="t" style="left:686px;top:474.9px;font-size:5px;line-height:5px;color:#333;">09000000000</div>
<div class="t" style="left:729.5px;top:474.9px;font-size:5px;line-height:5px;color:#333;">￥100</div>
<div class="t" style="left:729.5px;top:482.4px;font-size:5px;line-height:5px;color:#333;">事前決済</div>
<div class="t" style="left:1005px;top:474.9px;font-size:5px;line-height:5px;color:#333;">2025-10-08</div>
<div class="t" style="left:1049px;top:474.9px;font-size:5px;line-height:5px;color:#333;">自社サイト</div>
<div class="t" style="left:1049px;top:482.4px;font-size:5px;line-height:5px;color:#333;">日本語</div>
<div style="left:14px;top:514.75px;width:10.5px;height:10.0px;background:#fff;border:1px solid #9a9a9a;border-radius:2px;box-sizing:border-box"></div>
<div class="t" style="left:32px;top:508.15px;font-size:5px;line-height:5px;color:#007bff;">XJA250917103607</div>
<div class="t" style="left:90.5px;top:508.15px;font-size:5px;line-height:5px;color:#212529;font-weight:bold;">キャンセル</div>
<div class="t" style="left:228.5px;top:508.15px;font-size:5px;line-height:5px;color:#333;">設定なし</div>
<div class="t" style="left:366.5px;top:508.15px;font-size:5px;line-height:5px;color:#333;">ウエハラ シンゴ(1名)</div>
<div class="t" style="left:505px;top:508.15px;font-size:5px;line-height:5px;color:#333;">2025-10-31</div>
<div class="t" style="left:505px;top:515.65px;font-size:5px;line-height:5px;color:#333;">09:00</div>
<div class="t" style="left:548px;top:508.15px;font-size:5px;line-height:5px;color:#333;">【1427】パラセーリング</div>
<div class="t" style="left:686px;top:508.15px;font-size:5px;line-height:5px;color:#333;">09029671587</div>
<div class="t" style="left:729.5px;top:508.15px;font-size:5px;line-height:5px;color:#333;">￥8,000</div>
<div class="t" style="left:729.5px;top:515.65px;font-size:5px;line-height:5px;color:#333;">事前決済</div>
<div class="t" style="left:1005px;top:508.15px;font-size:5px;line-height:5px;color:#333;">2025-09-17</div>
<div class="t" style="left:1049px;top:508.15px;font-size:5px;line-height:5px;color:#333;">自社サイト</div>
<div class="t" style="left:1049px;top:515.65px;font-size:5px;line-height:5px;color:#333;">日本語</div>
<div style="left:14px;top:548.5px;width:10.5px;height:10.0px;background:#fff;border:1px solid #9a9a9a;border-radius:2px;box-sizing:border-box"></div>
<div class="t" style="left:32px;top:541.9px;font-size:5px;line-height:5px;color:#007bff;">ZQX250804092142</div>
<div class="t" style="left:90.5px;top:541.9px;font-size:5px;line-height:5px;color:#212529;font-weight:bold;">成約</div>
<div style="left:228.1px;top:540.9px;width:10.9px;height:6.0px;border:1.4px solid #1fa23a;border-radius:3px;background:#e8f6ea;box-sizing:border-box"></div>
<div class="t" style="left:228.5px;top:549.0px;font-size:5px;line-height:5px;color:#333;">返信済み</div>
<div class="t" style="left:366.5px;top:541.9px;font-size:5px;line-height:5px;color:#333;">スエヒロ ゲンキ(1名)</div>
<div class="t" style="left:505px;top:541.9px;font-size:5px;line-height:5px;color:#333;">2025-10-23</div>
<div class="t" style="left:505px;top:549.4px;font-size:5px;line-height:5px;color:#333;">09:00</div>
<div class="t" style="left:548px;top:541.9px;font-size:5px;line-height:5px;color:#333;">【1427】パラセーリング</div>
<div class="t" style="left:686px;top:541.9px;font-size:5px;line-height:5px;color:#333;">08000000001</div>
<div class="t" style="left:729.5px;top:541.9px;font-size:5px;line-height:5px;color:#333;">￥8,000</div>
<div class="t" style="left:729.5px;top:549.4px;font-size:5px;line-height:5px;color:#333;">現地払い</div>
<div class="t" style="left:1005px;top:541.9px;font-size:5px;line-height:5px;color:#333;">2025-08-04</div>
<div class="t" style="left:1049px;top:541.9px;font-size:5px;line-height:5px;color:#333;">自社サイト</div>
<div class="t" style="left:1049px;top:549.4px;font-size:5px;line-height:5px;color:#333;">日本語</div>
<div style="left:1074px;top:24px;width:714px;height:716px;border:1px solid #555;background:#fff;box-sizing:border-box"></div>
<div style="left:1091px;top:49.5px;width:679px;height:26.5px;background:#e9ecef;border-radius:3px"></div>
<div class="t s" style="left:1100.5px;top:58.78px;font-size:9.2px;line-height:9.2px;color:#007bff;transform:scaleX(0.74);transform-origin:0 0">TOP</div>
<div class="t s" style="left:1119.5px;top:59.46px;font-size:7.8px;line-height:7.8px;color:#6c757d;">/</div>
<div class="t s" style="left:1130px;top:59.46px;font-size:7.8px;line-height:7.8px;color:#007bff;">予約一覧</div>
<div class="t s" style="left:1166px;top:59.46px;font-size:7.8px;line-height:7.8px;color:#6c757d;">/</div>
<div class="t s" style="left:1176.5px;top:59.46px;font-size:7.8px;line-height:7.8px;color:#6c757d;">予約詳細</div>
<div style="left:1091px;top:91px;width:331px;height:572px;border:1px solid #5aa5f8;border-radius:3px;box-sizing:border-box;background:#fff"></div>
<div style="left:1091px;top:91px;width:331px;height:31px;background:#007bff;border-radius:3px 3px 0 0"></div>
<div class="t s" style="left:1104px;top:104.9px;font-size:7.5px;line-height:7.5px;color:#fff;">予約情報</div>
<div style="left:1092.5px;top:122px;width:328.0px;height:19.5px;background:#f2f2f2"></div>
<div style="left:1092.5px;top:159px;width:328.0px;height:26.5px;background:#f2f2f2"></div>
<div style="left:1092.5px;top:204px;width:328.0px;height:25.5px;background:#f2f2f2"></div>
<div style="left:1092.5px;top:248px;width:328.0px;height:45px;background:#f2f2f2"></div>
<div style="left:1092.5px;top:318.5px;width:328.0px;height:25.0px;background:#f2f2f2"></div>
<div style="left:1092.5px;top:369px;width:328.0px;height:64.25px;background:#f2f2f2"></div>
<div style="left:1092.5px;top:457px;width:328.0px;height:30.5px;background:#f2f2f2"></div>
<div style="left:1092.5px;top:505px;width:328.0px;height:18.5px;background:#f2f2f2"></div>
<div style="left:1092.5px;top:542px;width:328.0px;height:90.5px;background:#f2f2f2"></div>
<div style="left:1092.5px;top:141.0px;width:328.0px;height:1.0px;background:#e3e6ea"></div>
<div style="left:1092.5px;top:158.5px;width:328.0px;height:1.0px;background:#e3e6ea"></div>
<div style="left:1092.5px;top:185.0px;width:328.0px;height:1.0px;background:#e3e6ea"></div>
<div style="left:1092.5px;top:203.5px;width:328.0px;height:1.0px;background:#e3e6ea"></div>
<div style="left:1092.5px;top:229.0px;width:328.0px;height:1.0px;background:#e3e6ea"></div>
<div style="left:1092.5px;top:247.5px;width:328.0px;height:1.0px;background:#e3e6ea"></div>
<div style="left:1092.5px;top:292.5px;width:328.0px;height:1.0px;background:#e3e6ea"></div>
<div style="left:1092.5px;top:318.0px;width:328.0px;height:1.0px;background:#e3e6ea"></div>
<div style="left:1092.5px;top:343.0px;width:328.0px;height:1.0px;background:#e3e6ea"></div>
<div style="left:1092.5px;top:368.5px;width:328.0px;height:1.0px;background:#e3e6ea"></div>
<div style="left:1092.5px;top:432.75px;width:328.0px;height:1.0px;background:#e3e6ea"></div>
<div style="left:1092.5px;top:456.5px;width:328.0px;height:1.0px;background:#e3e6ea"></div>
<div style="left:1092.5px;top:487.0px;width:328.0px;height:1.0px;background:#e3e6ea"></div>
<div style="left:1092.5px;top:504.5px;width:328.0px;height:1.0px;background:#e3e6ea"></div>
<div style="left:1092.5px;top:523.0px;width:328.0px;height:1.0px;background:#e3e6ea"></div>
<div style="left:1092.5px;top:541.5px;width:328.0px;height:1.0px;background:#e3e6ea"></div>
<div style="left:1092.5px;top:632.0px;width:328.0px;height:1.0px;background:#e3e6ea"></div>
<div style="left:1170.5px;top:122px;width:1.0px;height:510.5px;background:#e3e6ea"></div>
<div style="left:1092.5px;top:122px;width:1.0px;height:510.5px;background:#e3e6ea"></div>
<div style="left:1419.5px;top:122px;width:1.0px;height:510.5px;background:#e3e6ea"></div>
<div class="t" style="left:1095.5px;top:127.9px;font-size:7.5px;line-height:7.5px;color:#212529;font-weight:bold;-webkit-text-stroke:0.12px #212529">クライアント</div>
<div class="t" style="left:1095.5px;top:147.4px;font-size:7.5px;line-height:7.5px;color:#212529;font-weight:bold;-webkit-text-stroke:0.12px #212529">お客様番号</div>
<div class="t" style="left:1095.5px;top:164.9px;font-size:7.5px;line-height:7.5px;color:#212529;font-weight:bold;-webkit-text-stroke:0.12px #212529">氏名カナ</div>
<div class="t" style="left:1095.5px;top:191.4px;font-size:7.5px;line-height:7.5px;color:#212529;font-weight:bold;-webkit-text-stroke:0.12px #212529">ステータス</div>
<div class="t" style="left:1095.5px;top:209.9px;font-size:7.5px;line-height:7.5px;color:#212529;font-weight:bold;-webkit-text-stroke:0.12px #212529">返信状況</div>
<div class="t" style="left:1095.5px;top:235.4px;font-size:7.5px;line-height:7.5px;color:#212529;font-weight:bold;-webkit-text-stroke:0.12px #212529">予約人数</div>
<div class="t" style="left:1095.5px;top:257.1px;font-size:7.5px;line-height:7.5px;color:#212529;font-weight:bold;-webkit-text-stroke:0.12px #212529">予約日</div>
<div class="t" style="left:1095.5px;top:298.9px;font-size:7.5px;line-height:7.5px;color:#212529;font-weight:bold;-webkit-text-stroke:0.12px #212529">開始時間</div>
<div class="t" style="left:1095.5px;top:324.4px;font-size:7.5px;line-height:7.5px;color:#212529;font-weight:bold;-webkit-text-stroke:0.12px #212529">電話番号</div>
<div class="t" style="left:1095.5px;top:349.4px;font-size:7.5px;line-height:7.5px;color:#212529;font-weight:bold;-webkit-text-stroke:0.12px #212529">メールアドレス</div>
<div class="t" style="left:1095.5px;top:374.9px;font-size:7.5px;line-height:7.5px;color:#212529;font-weight:bold;-webkit-text-stroke:0.12px #212529">合計金額</div>
<div class="t" style="left:1095.5px;top:439.15px;font-size:7.5px;line-height:7.5px;color:#212529;font-weight:bold;-webkit-text-stroke:0.12px #212529">お支払い方法</div>
<div class="t" style="left:1095.5px;top:462.9px;font-size:7.5px;line-height:7.5px;color:#212529;font-weight:bold;-webkit-text-stroke:0.12px #212529">お申込みカテゴリ</div>
<div class="t" style="left:1095.5px;top:493.4px;font-size:7.5px;line-height:7.5px;color:#212529;font-weight:bold;-webkit-text-stroke:0.12px #212529">お申込みメニュー</div>
<div class="t" style="left:1095.5px;top:510.9px;font-size:7.5px;line-height:7.5px;color:#212529;font-weight:bold;-webkit-text-stroke:0.12px #212529">集合方法</div>
<div class="t" style="left:1095.5px;top:529.4px;font-size:7.5px;line-height:7.5px;color:#212529;font-weight:bold;-webkit-text-stroke:0.12px #212529">予約媒体</div>
<div class="t" style="left:1095.5px;top:547.9px;font-size:7.5px;line-height:7.5px;color:#212529;font-weight:bold;-webkit-text-stroke:0.12px #212529">メモ</div>
<div class="t s" style="left:1173.75px;top:128.15px;font-size:7.5px;line-height:7.5px;color:#333;">瀬底ビーチマリンクラブ（デモ版）</div>
<div class="t s" style="left:1173.75px;top:146.7px;font-size:7.5px;line-height:7.5px;color:#333;">ZQX250804092142</div>
<div style="left:1173.5px;top:163px;width:112.1px;height:18.5px;background:#fff;border:1px solid #d5dadf;border-radius:2px;box-sizing:border-box"></div>
<div style="left:1173.5px;top:163px;width:20.0px;height:18.5px;background:#e9ecef;border:1px solid #d5dadf;border-radius:2px 0 0 2px;box-sizing:border-box"></div>
<div class="t s" style="left:1179.0px;top:168.42px;font-size:8.5px;line-height:8.5px;color:#6c757d;">姓</div>
<div class="t s" style="left:1199.0px;top:168.56px;font-size:8.2px;line-height:8.2px;color:#333;">ヤマダ</div>
<div style="left:1305px;top:163px;width:111.5px;height:18.5px;background:#fff;border:1px solid #d5dadf;border-radius:2px;box-sizing:border-box"></div>
<div style="left:1305px;top:163px;width:20px;height:18.5px;background:#e9ecef;border:1px solid #d5dadf;border-radius:2px 0 0 2px;box-sizing:border-box"></div>
<div class="t s" style="left:1310.5px;top:168.42px;font-size:8.5px;line-height:8.5px;color:#6c757d;">名</div>
<div class="t s" style="left:1330.5px;top:168.56px;font-size:8.2px;line-height:8.2px;color:#333;">タロウ</div>
<div class="t s" style="left:1173.75px;top:191.4px;font-size:7.5px;line-height:7.5px;color:#333;">成約</div>
<div style="left:1173.5px;top:207.5px;width:243.0px;height:19.0px;background:#fff;border:1px solid #dfe3e7;border-radius:2px;box-sizing:border-box"></div>
<svg style="position:absolute;left:1407.3px;top:214.19px;overflow:visible" width="6.6" height="5.63"><path d="M0.8 1 L3.3 3.63 L5.8 1" fill="none" stroke="#343a40" stroke-width="1.5"/></svg>
<div class="t s" style="left:1181.5px;top:213.66px;font-size:8px;line-height:8px;color:#6c757d;">返信済み</div>
<div class="t s" style="left:1175px;top:235.15px;font-size:7.5px;line-height:7.5px;color:#333;">1</div>
<div style="left:1121px;top:256px;width:34.5px;height:9px;background:#17a2b8;border-radius:3px"></div>
<div class="t" style="left:1124px;top:258.06px;font-size:5.5px;line-height:5.5px;color:#fff;font-weight:bold;">台帳を見る</div>
<div style="left:1173.5px;top:251px;width:243.0px;height:19.5px;background:#e9ecef;border:1px solid #dfe3e7;border-radius:2px;box-sizing:border-box"></div>
<div class="t s" style="left:1179px;top:256.92px;font-size:8.5px;line-height:8.5px;color:#555;">2025-10-23</div>
<div class="t s" style="left:1173.75px;top:275.4px;font-size:7.5px;line-height:7.5px;color:#333;">申込日時 2025年08月04日 09:21</div>
<div style="left:1173.5px;top:296.5px;width:243.0px;height:18.5px;background:#fff;border:1px solid #dfe3e7;border-radius:2px;box-sizing:border-box"></div>
<div class="t s" style="left:1179px;top:301.92px;font-size:8.5px;line-height:8.5px;color:#555;">09:00</div>
<div style="left:1173.5px;top:321.5px;width:243.0px;height:19.0px;background:#fff;border:1px solid #dfe3e7;border-radius:2px;box-sizing:border-box"></div>
<div class="t s" style="left:1179px;top:326.92px;font-size:8.5px;line-height:8.5px;color:#555;">08000000001</div>
<div style="left:1173.5px;top:347px;width:243.0px;height:18.5px;background:#fff;border:1px solid #dfe3e7;border-radius:2px;box-sizing:border-box"></div>
<div class="t s" style="left:1176.5px;top:351.44px;font-size:9.5px;line-height:9.5px;color:#333;letter-spacing:0.6px">test@gmail.com</div>
<div class="t" style="left:1276.5px;top:355.6px;font-size:5px;line-height:5px;color:#333;">..</div>
<div style="left:1173.5px;top:372.5px;width:243.0px;height:19.0px;background:#e9ecef;border:1px solid #dfe3e7;border-radius:2px;box-sizing:border-box"></div>
<div class="t s" style="left:1179px;top:377.92px;font-size:8.5px;line-height:8.5px;color:#555;">8000</div>
<div class="t" style="left:1174px;top:399.74px;font-size:7.2px;line-height:7.2px;color:#212529;font-weight:bold;">▼内訳</div>
<div class="t s" style="left:1174px;top:410.95px;font-size:7.4px;line-height:7.4px;color:#333;">お一人様（4〜65歳／体重20〜120kg）　￥8,000 x1 =8,000円</div>
<svg style="position:absolute;left:1184.5px;top:437.7px" width="8" height="8"><circle cx="4" cy="4" r="3.5" fill="#007bff"/><circle cx="4" cy="4" r="1.3" fill="#fff"/></svg>
<div class="t s" style="left:1193px;top:440.3px;font-size:7.7px;line-height:7.7px;color:#333;">現地払い</div>
<svg style="position:absolute;left:1239px;top:437.7px" width="8" height="8"><circle cx="4" cy="4" r="3.3" fill="#fff" stroke="#666" stroke-width="0.8"/></svg>
<div class="t s" style="left:1247px;top:440.3px;font-size:7.7px;line-height:7.7px;color:#333;">現地払い（手入力）</div>
<svg style="position:absolute;left:1332px;top:437.7px" width="8" height="8"><circle cx="4" cy="4" r="3.3" fill="#fff" stroke="#666" stroke-width="0.8"/></svg>
<div class="t s" style="left:1340.5px;top:440.3px;font-size:7.7px;line-height:7.7px;color:#333;">事前決済（手入力）</div>
<div class="t s" style="left:1174px;top:462.4px;font-size:7.5px;line-height:7.5px;color:#333;">日本料理体験</div>
<div style="left:1174.5px;top:474.5px;width:38.5px;height:8.0px;background:#f7f7f7;border-radius:2px"></div>
<div class="t" style="left:1176.3px;top:476.01px;font-size:5.6px;line-height:5.6px;color:#212529;font-weight:bold;">日本料理体験</div>
<div class="t s" style="left:1174px;top:492.4px;font-size:7.5px;line-height:7.5px;color:#333;">【1427】パラセーリング</div>
<div class="t s" style="left:1174px;top:511.4px;font-size:7.5px;line-height:7.5px;color:#333;">ショップ集合</div>
<div class="t s" style="left:1174px;top:529.15px;font-size:7.5px;line-height:7.5px;color:#333;">自社サイト経由</div>
<div style="left:1173.5px;top:545.5px;width:243.0px;height:83.5px;background:#fff;border:1px solid #dfe3e7;border-radius:2px;box-sizing:border-box"></div>
<svg style="position:absolute;left:1409px;top:622px" width="6" height="6"><path d="M1 5.5 L5.5 1 M3 5.5 L5.5 3" stroke="#777" stroke-width="0.7"/></svg>
<div style="left:1352px;top:636.25px;width:64.5px;height:23.25px;background:#28a745;border-radius:3px"></div>
<div class="t" style="left:1360.5px;top:643.92px;font-size:8.5px;line-height:8.5px;color:#fff;font-weight:bold;">更新 / 確認</div>
<div style="left:1091px;top:663px;width:331px;height:45px;border:1px solid #5aa5f8;border-radius:3px;box-sizing:border-box;background:#fff"></div>
<div style="left:1101.25px;top:673.75px;width:309.5px;height:23.25px;background:#6c757d;border-radius:3px"></div>
<div class="t" style="left:1207.5px;top:680.94px;font-size:9.5px;line-height:9.5px;color:#fff;font-weight:bold;">予約メールを再送する</div>
<div style="left:1439.5px;top:91.25px;width:330.5px;height:28.25px;background:#007bff;border-radius:3px"></div>
<div class="t s" style="left:1452.5px;top:101.9px;font-size:7.5px;line-height:7.5px;color:#fff;">変更履歴</div>
<div style="left:1439.5px;top:129.5px;width:330.5px;height:263.0px;border:1px solid #5aa5f8;border-radius:3px;box-sizing:border-box;background:#fff"></div>
<div style="left:1439.5px;top:129.5px;width:330.5px;height:27.5px;background:#007bff;border-radius:3px 3px 0 0"></div>
<div class="t s" style="left:1452.5px;top:140.0px;font-size:7.5px;line-height:7.5px;color:#fff;">お問い合わせ</div>
<div style="left:1757px;top:158px;width:12px;height:198px;background:#fbfbfb"></div>
<svg style="position:absolute;left:1759px;top:161px" width="8" height="6"><path d="M0.5 5.5 L4 0.8 L7.5 5.5Z" fill="#8a8a8a"/></svg>
<svg style="position:absolute;left:1759px;top:348px" width="8" height="6"><path d="M0.5 0.5 L4 5.2 L7.5 0.5Z" fill="#8a8a8a"/></svg>
<div style="left:1448.5px;top:165px;width:301.2px;height:180.5px;background:#d1ecf1;border-radius:3px"></div>
<div style="left:1461.4px;top:176px;width:16.6px;height:8.6px;background:#28a745;border-radius:2px"></div>
<div class="t" style="left:1464px;top:177.66px;font-size:5.5px;line-height:5.5px;color:#fff;font-weight:bold;">既読</div>
<div class="t" style="left:1461.5px;top:187.4px;font-size:7.5px;line-height:7.5px;color:#0c5460;font-weight:bold;">瀬底ビーチマリンクラブ（デモ版）</div>
<div class="t" style="left:1461.5px;top:199.4px;font-size:7.5px;line-height:7.5px;color:#0c5460;font-weight:bold;">2025年08月04日 09時22分</div>
<div style="left:1461.6px;top:212.4px;width:274.8px;height:120.0px;background:#fff;border:1px solid #a9a9a9;border-radius:5px;box-sizing:border-box"></div>
<div class="t s" style="left:1468.7px;top:218.76px;font-size:7.8px;line-height:7.8px;color:#333;letter-spacing:1.1px">ヤマダ タロウ 様</div>
<div class="t s" style="left:1466.5px;top:247.76px;font-size:7.8px;line-height:7.8px;color:#333;">・参加方案: 滑翔傘帆</div>
<div class="t s" style="left:1466.5px;top:261.56px;font-size:7.8px;line-height:7.8px;color:#333;">・預約日期和時間： 2025年10月23日 09:00〜</div>
<div class="t s" style="left:1466.5px;top:275.26px;font-size:7.8px;line-height:7.8px;color:#333;">・參加人數： 1人</div>
<div class="t s" style="left:1466.5px;top:290.2px;font-size:7.3px;line-height:7.3px;color:#333;">・總金額：￥8,000</div>
<div class="t s" style="left:1465px;top:318.01px;font-size:7.8px;line-height:7.8px;color:#333;">這通常是模板的主體</div>
<div style="left:1644.5px;top:365.2px;width:122.3px;height:19.5px;background:#17a2b8;border-radius:3px"></div>
<div class="t" style="left:1650px;top:370.97px;font-size:8.4px;line-height:8.4px;color:#fff;font-weight:bold;">お問い合わせへの回答・履歴</div>
<div style="left:1439.5px;top:403px;width:330.5px;height:138.5px;border:1px solid #5aa5f8;border-radius:3px;box-sizing:border-box;background:#fff"></div>
<div style="left:1439.5px;top:403px;width:330.5px;height:27.3px;background:#007bff;border-radius:3px 3px 0 0"></div>
<div class="t s" style="left:1452.5px;top:412.9px;font-size:7.5px;line-height:7.5px;color:#fff;">予約履歴</div>
<div style="left:1450.9px;top:436.2px;width:308.8px;height:15.4px;background:#6c757d"></div>
<div style="left:1513px;top:436.2px;width:1px;height:15.4px;background:#9aa0a6"></div>
<div style="left:1576px;top:436.2px;width:1px;height:15.4px;background:#9aa0a6"></div>
<div style="left:1672px;top:436.2px;width:1px;height:15.4px;background:#9aa0a6"></div>
<div style="left:1696px;top:436.2px;width:1px;height:15.4px;background:#9aa0a6"></div>
<div class="t" style="left:1453.4px;top:441.12px;font-size:6px;line-height:6px;color:#fff;font-weight:bold;">参加日</div>
<div class="t" style="left:1515.5px;top:441.12px;font-size:6px;line-height:6px;color:#fff;font-weight:bold;">予約ステータス</div>
<div class="t" style="left:1578.5px;top:441.12px;font-size:6px;line-height:6px;color:#fff;font-weight:bold;">プラン</div>
<div class="t" style="left:1674.5px;top:441.12px;font-size:6px;line-height:6px;color:#fff;font-weight:bold;">人数</div>
<div class="t" style="left:1698.5px;top:441.12px;font-size:6px;line-height:6px;color:#fff;font-weight:bold;">流入元</div>
<div style="left:1450.9px;top:468.5px;width:308.8px;height:1.0px;background:#dee2e6"></div>
<div style="left:1450.9px;top:484.5px;width:308.8px;height:1.0px;background:#dee2e6"></div>
<div style="left:1450.9px;top:451.6px;width:1.0px;height:33.4px;background:#dee2e6"></div>
<div style="left:1513px;top:451.6px;width:1px;height:33.4px;background:#dee2e6"></div>
<div style="left:1576px;top:451.6px;width:1px;height:33.4px;background:#dee2e6"></div>
<div style="left:1672px;top:451.6px;width:1px;height:33.4px;background:#dee2e6"></div>
<div style="left:1696px;top:451.6px;width:1px;height:33.4px;background:#dee2e6"></div>
<div style="left:1759.7px;top:451.6px;width:1.0px;height:33.4px;background:#dee2e6"></div>
<div class="t" style="left:1453.3px;top:457.36px;font-size:5.5px;line-height:5.5px;color:#333;">2025/07/31 (木)</div>
<div class="t" style="left:1517px;top:457.36px;font-size:5.5px;line-height:5.5px;color:#333;">キャンセル</div>
<div class="t" style="left:1580.5px;top:457.36px;font-size:5.5px;line-height:5.5px;color:#333;">【1427】パラセーリング</div>
<div class="t" style="left:1675.5px;top:457.36px;font-size:5.5px;line-height:5.5px;color:#333;">1</div>
<div class="t" style="left:1699.8px;top:457.36px;font-size:5.5px;line-height:5.5px;color:#333;">自社サイト経由</div>
<div class="t" style="left:1453.3px;top:472.86px;font-size:5.5px;line-height:5.5px;color:#333;">2025/07/09 (水)</div>
<div class="t" style="left:1517px;top:472.86px;font-size:5.5px;line-height:5.5px;color:#333;">キャンセル</div>
<div class="t" style="left:1580.5px;top:472.86px;font-size:5.5px;line-height:5.5px;color:#333;">【1427】パラセーリング</div>
<div class="t" style="left:1675.5px;top:472.86px;font-size:5.5px;line-height:5.5px;color:#333;">1</div>
<div class="t" style="left:1699.8px;top:472.86px;font-size:5.5px;line-height:5.5px;color:#333;">自社サイト経由</div>
<div class="t s" style="left:1450px;top:497.4px;font-size:7.5px;line-height:7.5px;color:#333;">total: 2件</div>
<div style="left:1689.4px;top:506.2px;width:70.7px;height:19.5px;background:#17a2b8;border-radius:3px"></div>
<div class="t" style="left:1694.5px;top:511.82px;font-size:8.3px;line-height:8.3px;color:#fff;font-weight:bold;">顧客詳細の確認</div>
<svg style="position:absolute;left:0;top:0" width="1800" height="800"><polygon points="82,410.8 1075,382.3 1075,436.7 82,409.6" fill="#fff"/><path d="M82 410.8 L1075 382.3 M82 409.6 L1075 436.7" stroke="#555" stroke-width="1.1" fill="none"/></svg>
<svg style="position:absolute;left:0;top:0" width="1800" height="800"><circle cx="26.46" cy="400.42" r="2.5" fill="#f00"/><circle cx="36.46" cy="400.42" r="2.5" fill="#f00"/><circle cx="46.46" cy="400.42" r="2.5" fill="#f00"/><circle cx="56.46" cy="400.42" r="2.5" fill="#f00"/><circle cx="66.46000000000001" cy="400.42" r="2.5" fill="#f00"/><circle cx="76.46000000000001" cy="400.42" r="2.5" fill="#f00"/><circle cx="84.375" cy="402.5" r="2.5" fill="#f00"/><circle cx="84.375" cy="412.5" r="2.5" fill="#f00"/><circle cx="26.46" cy="406.46" r="2.5" fill="#f00"/><circle cx="26.46" cy="416.46" r="2.5" fill="#f00"/><circle cx="32.5" cy="420.42" r="2.5" fill="#f00"/><circle cx="42.5" cy="420.42" r="2.5" fill="#f00"/><circle cx="52.5" cy="420.42" r="2.5" fill="#f00"/><circle cx="62.5" cy="420.42" r="2.5" fill="#f00"/><circle cx="72.5" cy="420.42" r="2.5" fill="#f00"/><circle cx="82.5" cy="420.42" r="2.5" fill="#f00"/></svg>
</body></html>
